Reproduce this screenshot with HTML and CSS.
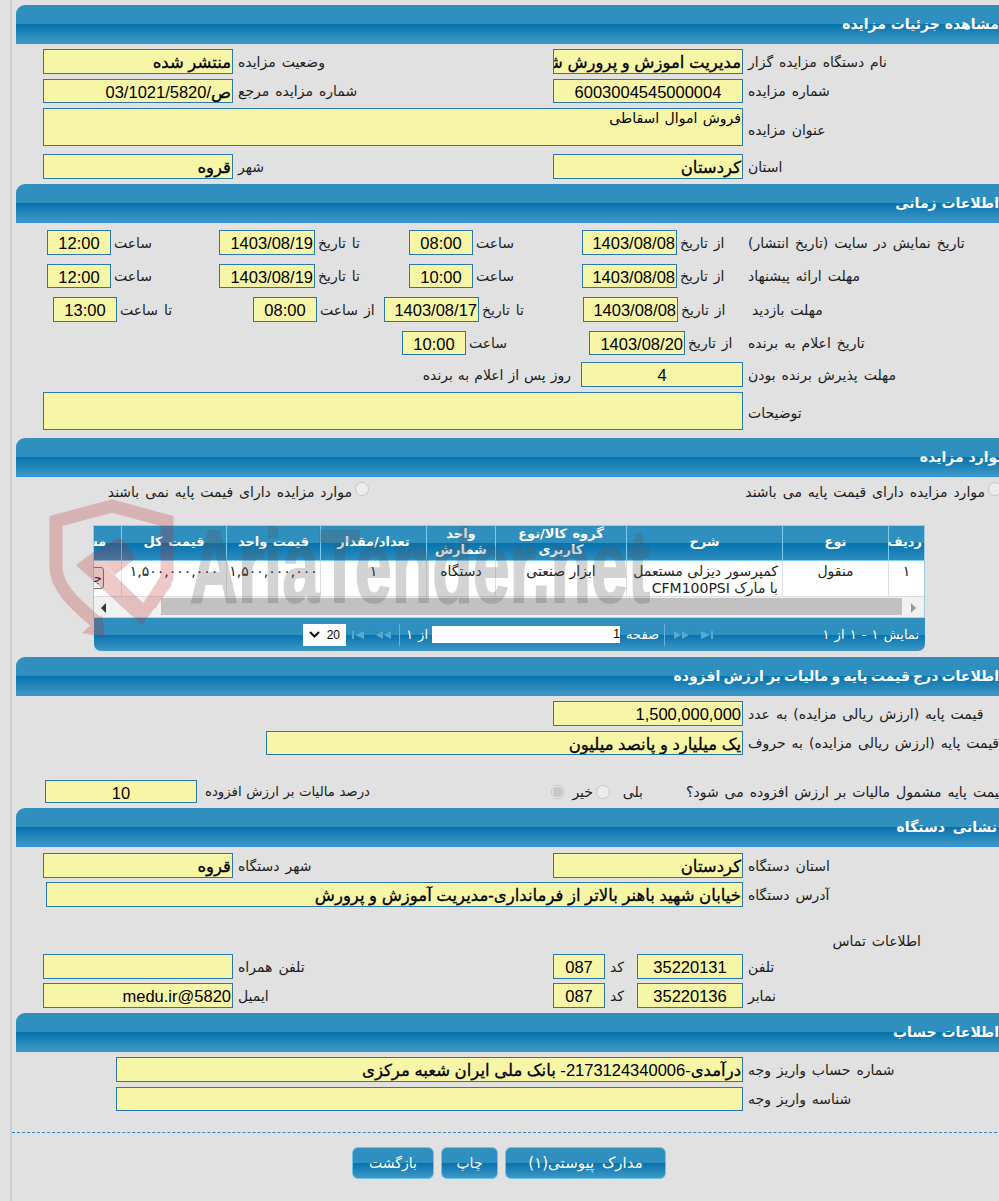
FILE: index.html
```html
<!DOCTYPE html>
<html lang="fa">
<head>
<meta charset="utf-8">
<title>مشاهده جزئیات مزایده</title>
<link rel="stylesheet" href="styles.css">
</head>
<body>
<div class="page">

  <section class="sec">
    <h2 class="bar">مشاهده جزئیات مزایده</h2>
    <div class="row mt5 h25"><span class="c w259">نام دستگاه مزایده گزار</span><div class="in b w190 left5">مدیریت اموزش و پرورش شهرستان قروه</div><span class="c w310 left5">وضعیت مزایده</span><div class="in b w190 left5">منتشر شده</div></div>
    <div class="row mt5 h24"><span class="c w259">شماره مزایده</span><div class="in mid w190 left5">6003004545000004</div><span class="c w310 left5">شماره مزایده مرجع</span><div class="in w190 left5"><b>ص</b>/03/1021/5820</div></div>
    <div class="row mt5 h38"><span class="c w259 low">عنوان مزایده</span><div class="in area w700 left5">فروش اموال اسقاطی</div></div>
    <div class="row mt8 h25"><span class="c w259">استان</span><div class="in b w190 left5">کردستان</div><span class="c w310 left5">شهر</span><div class="in b w190 left5">قروه</div></div>
  </section>

  <section class="sec mt5">
    <h2 class="bar">اطلاعات زمانی</h2>
    <div class="row mt7 h25"><span class="c w259">تاریخ نمایش در سایت (تاریخ انتشار)</span><span class="c w71">از تاریخ</span><div class="in w95">1403/08/08</div><span class="c w109">ساعت</span><div class="in mid w64">08:00</div><span class="c w94">تا تاریخ</span><div class="in w96">1403/08/19</div><span class="c w108">ساعت</span><div class="in mid w64">12:00</div></div>
    <div class="row mt9 h24"><span class="c w259">مهلت ارائه پیشنهاد</span><span class="c w71">از تاریخ</span><div class="in w95">1403/08/08</div><span class="c w109">ساعت</span><div class="in mid w64">10:00</div><span class="c w94">تا تاریخ</span><div class="in w96">1403/08/19</div><span class="c w108">ساعت</span><div class="in mid w64">12:00</div></div>
    <div class="row mt9 h25"><span class="c w259 ind4">مهلت بازدید</span><span class="c w70">از تاریخ</span><div class="in w95">1403/08/08</div><span class="c w104">تا تاریخ</span><div class="in w95">1403/08/17</div><span class="c w67">از ساعت</span><div class="in mid w64">08:00</div><span class="c w136">تا ساعت</span><div class="in mid w64">13:00</div></div>
    <div class="row mt9 h24"><span class="c w259">تاریخ اعلام به برنده</span><span class="c w63">از تاریخ</span><div class="in w96">1403/08/20</div><span class="c w123">ساعت</span><div class="in mid w64">10:00</div></div>
    <div class="row mt7 h25"><span class="c w259">مهلت پذیرش برنده بودن</span><div class="in mid w162 left5">4</div><span class="c days">روز پس از اعلام به برنده</span></div>
    <div class="row mt5 h38"><span class="c w259 low2">توضیحات</span><div class="in area w700 left5"></div></div>
  </section>

  <section class="sec mt8">
    <h2 class="bar t-items">موارد مزایده</h2>
    <div class="radios mt5">
      <label class="rad r1"><input type="radio" name="p" disabled><span>موارد مزایده دارای قیمت پایه می باشند</span></label>
      <label class="rad"><input type="radio" name="p" disabled><span>موارد مزایده دارای فیمت پایه نمی باشند</span></label>
    </div>
    <div class="grid">
      <table>
        <colgroup><col class="k1"><col class="k2"><col class="k3"><col class="k4"><col class="k5"><col class="k6"><col class="k7"><col class="k8"><col class="k9"></colgroup>
        <thead><tr><th>ردیف</th><th>نوع</th><th>شرح</th><th>گروه کالا/نوع کاربری</th><th>واحد شمارش</th><th>تعداد/مقدار</th><th>قیمت واحد</th><th>قیمت کل</th><th>مشاهده</th></tr></thead>
        <tbody><tr><td>۱</td><td>منقول</td><td class="desc">کمپرسور دیزلی مستعمل<br>با مارک CFM100PSI</td><td>ابزار صنعتی</td><td>دستگاه</td><td>۱</td><td>۱,۵۰۰,۰۰۰,۰۰۰</td><td>۱,۵۰۰,۰۰۰,۰۰۰</td><td class="act"><span class="mini">جزئیات</span></td></tr></tbody>
      </table>
      <div class="hscroll">
        <span class="sb-btn"><svg width="7" height="10" viewBox="0 0 7 10"><path d="M1 0l5 5-5 5z" fill="#9a9a9a"/></svg></span>
        <span class="thumb"></span>
        <span class="sb-left"><svg width="7" height="10" viewBox="0 0 7 10"><path d="M6 0L1 5l5 5z" fill="#333"/></svg></span>
      </div>
    </div>
    <div class="pager">
      <span class="p-info">نمایش ۱ - ۱ از ۱</span>
      <svg class="ic12" width="12" height="8" viewBox="0 0 12 8"><path d="M0 0l9 4-9 4zM10 0h2v8h-2z" fill="#5aa7d0"/></svg>
      <svg class="ic15" width="15" height="8" viewBox="0 0 15 8"><path d="M0 0l7 4-7 4zM8 0l7 4-7 4z" fill="#5aa7d0"/></svg>
      <span class="sep s1"></span>
      <span class="p-page">صفحه</span>
      <span class="p-input">1</span>
      <span class="p-of">از ۱</span>
      <span class="sep"></span>
      <svg class="ic15b" width="15" height="8" viewBox="0 0 15 8"><path d="M15 0L8 4l7 4zM7 0L0 4l7 4z" fill="#5aa7d0"/></svg>
      <svg class="ic15" width="12" height="8" viewBox="0 0 12 8"><path d="M12 0L3 4l9 4zM0 0h2v8H0z" fill="#5aa7d0"/></svg>
      <span class="p-size"><span>20</span><svg width="11" height="7" viewBox="0 0 11 7"><path d="M1 1l4.500 4.500L10 1" fill="none" stroke="#111" stroke-width="2"/></svg></span>
    </div>
  </section>

  <section class="sec mt6">
    <h2 class="bar t-price">اطلاعات درج قیمت پایه و مالیات بر ارزش افزوده</h2>
    <div class="row mt5 h25"><span class="c w259">قیمت پایه (ارزش ریالی مزایده) به عدد</span><div class="in w190 left5">1,500,000,000</div></div>
    <div class="row mt5 h24"><span class="c w259">قیمت پایه (ارزش ریالی مزایده) به حروف</span><div class="in b w477 left5">یک میلیارد و پانصد میلیون</div></div>
    <div class="row mt25 h23">
      <span class="c w321">قیمت پایه مشمول مالیات بر ارزش افزوده می شود؟</span>
      <span class="yes">بلی</span><input class="rb" type="radio" name="t" disabled>
      <span class="no">خیر</span><input class="rb chk" type="radio" name="t" disabled checked>
      <span class="c vat">درصد مالیات بر ارزش افزوده</span><div class="in mid w152">10</div>
    </div>
  </section>

  <section class="sec mt5">
    <h2 class="bar t-addr">نشانی دستگاه</h2>
    <div class="row mt6 h25"><span class="c w259">استان دستگاه</span><div class="in b w190 left5">کردستان</div><span class="c w310 left5">شهر دستگاه</span><div class="in b w190 left5">قروه</div></div>
    <div class="row mt4 h25"><span class="c w259">آدرس دستگاه</span><div class="in b w697 left5">خیابان شهید باهنر بالاتر از فرمانداری-مدیریت آموزش و پرورش</div></div>
    <div class="row mt25 h18"><span class="contact">اطلاعات تماس</span></div>
    <div class="row mt4 h25"><span class="c w259">تلفن</span><div class="in mid w106 left5">35220131</div><span class="c w32">کد</span><div class="in mid w52">087</div><span class="c w310 left5">تلفن همراه</span><div class="in w190 left5"></div></div>
    <div class="row mt4 h25"><span class="c w259">نمابر</span><div class="in mid w106 left5">35220136</div><span class="c w32">کد</span><div class="in mid w52">087</div><span class="c w310 left5">ایمیل</span><div class="in w190 left5">5820@medu.ir</div></div>
  </section>

  <section class="sec mt5">
    <h2 class="bar">اطلاعات حساب</h2>
    <div class="row mt5 h25"><span class="c w259">شماره حساب واریز وجه</span><div class="in w627 left5"><b>درآمدی</b>-2173124340006- <b>بانک ملی ایران شعبه مرکزی</b></div></div>
    <div class="row mt5 h24"><span class="c w259">شناسه واریز وجه</span><div class="in w627 left5"></div></div>
  </section>

  <div class="dash"></div>
  <div class="actions">
    <button class="btn w161" type="button">مدارک پیوستی(۱)</button>
    <button class="btn w57" type="button">چاپ</button>
    <button class="btn w82" type="button">بازگشت</button>
  </div>

  <svg class="mark" width="640" height="170" viewBox="0 0 640 170" aria-hidden="true">
    <g class="shield">
      <path class="band" d="M56 127C30 105 16 90 16 72V26L72 11 127 26V83L110 110"/>
      <path class="fill" d="M42 138L65 142 62 120zM36 70L52 58 103 108 120 85 132 90 102 130zM80 42L96 63 75 80 52 58z"/>
    </g>
    <text class="mark-text" x="150" y="107" textLength="460" lengthAdjust="spacingAndGlyphs">AriaTender.net</text>
  </svg>
</div>
</body>
</html>
```
FILE: styles.css
```css
html,body{margin:0;background:#e1e1e1;overflow:hidden;height:1201px;}
body{font-family:"DejaVu Sans",sans-serif;font-size:14px;word-spacing:1.5px;color:#1c1c1c;}
.page{position:relative;direction:rtl;width:991px;margin-left:10px;padding:5px 0 0 4px;border-left:2px solid #d0d0d0;height:1196px;box-sizing:content-box;}
.mt4{margin-top:4px}.mt5{margin-top:5px}.mt6{margin-top:6px}.mt7{margin-top:7px}.mt8{margin-top:8px}.mt9{margin-top:9px}.mt25{margin-top:25px}
.h18{height:18px}.h23{height:23px}.h24{height:24px}.h25{height:25px}.h38{height:38px}
.bar{box-sizing:border-box;height:39px;margin:0;background:linear-gradient(#2f8fbf 0 50%,#0672ad 50%,#3f98c6);border-bottom:1px solid #2e92dc;color:#fff;font-size:14px;word-spacing:0;line-height:38px;padding-right:8px;border-top-left-radius:9px;white-space:nowrap;}
.t-items{padding-right:1px;}
.t-price{word-spacing:-1.700px;}
.t-addr{word-spacing:3px;padding-right:10px;}
.row{display:flex;align-items:center;white-space:nowrap;}
.c{flex:none;box-sizing:border-box;text-align:left;padding-left:3px;}
.w259{width:259px;padding-left:0}
.w310{width:310px;padding-left:0}
.w321{width:321px;padding-left:0}
.w32{width:32px;padding-left:5px}
.w63{width:63px}.w67{width:67px}.w70{width:70px}.w71{width:71px}.w94{width:94px}.w104{width:104px}.w108{width:108px}.w109{width:109px}.w123{width:123px}.w136{width:136px}
.ind4{padding-left:4px}
.low{padding-top:6px}
.low2{padding-top:4px}
.left5{margin-right:5px}
.in{flex:none;box-sizing:border-box;height:100%;border:1px solid #2a78ae;background:#f7f5a6;color:#000;font-family:"Liberation Sans","DejaVu Sans",sans-serif;font-size:16.5px;word-spacing:0;line-height:24px;padding:0 1px;text-align:right;overflow:hidden;white-space:nowrap;}
.b,.in b{font-weight:400;-webkit-text-stroke:.3px #000;}
.mid{text-align:center;}
.area{font-family:"DejaVu Sans",sans-serif;font-size:14px;word-spacing:1px;line-height:19px;white-space:normal;}
.w52{width:52px}.w64{width:64px}.w95{width:95px}.w96{width:96px}.w106{width:106px}.w152{width:152px}.w162{width:162px}.w190{width:190px}.w477{width:477px}.w627{width:627px}.w697{width:697px}.w700{width:700px}
.days{padding:0 10px 0 0;text-align:right;word-spacing:.5px;}
.radios{display:flex;height:20px;white-space:nowrap;}
.rad{display:flex;flex:none;}
.rad span{margin-right:3px;padding-top:2px;}
.r1{box-sizing:border-box;width:638px;padding-right:5px;}
input[type=radio]{appearance:none;-webkit-appearance:none;flex:none;box-sizing:border-box;width:14px;height:14px;margin:0;border:1px solid #c6c6c6;border-radius:50%;background:#ececec;}
.grid{box-sizing:border-box;width:832px;height:93px;margin:23px 82px 0 0;border:1px solid #9ccbe4;border-bottom-color:#a9d3ea;background:#fff;overflow:hidden;}
table{border-collapse:separate;border-spacing:0;table-layout:fixed;width:884px;}
.k1{width:36px}.k2{width:106px}.k3{width:156px}.k4{width:131px}.k5{width:69px}.k6{width:106px}.k7{width:94px}.k8{width:105px}.k9{width:81px}
th{box-sizing:border-box;height:35px;padding:0 2px 2px;background:linear-gradient(#2f8fbf 0 50%,#0672ad 50%,#2c8dc0);border-left:1px solid #78cdf3;border-bottom:1px solid #78cdf3;color:#fff;font-size:13px;word-spacing:1px;line-height:16px;font-weight:700;}
td{box-sizing:border-box;height:36px;padding:2px 2px 0;border-left:1px solid #dedede;border-bottom:1px solid #dedede;text-align:center;vertical-align:top;font-size:14px;word-spacing:0;line-height:16.5px;color:#222;}
.desc{text-align:right;padding-right:4px;white-space:nowrap;}
.act{padding-right:17px;text-align:right;white-space:nowrap;overflow:hidden;}
.mini{display:inline-block;width:60px;height:22px;margin-top:4px;border:1px solid #777;border-radius:3px;background:#f3f3f3;font-size:13px;line-height:20px;box-sizing:border-box;padding-right:1px;text-align:right;}
.hscroll{display:flex;height:21px;background:#f1f1f1;}
.sb-btn{flex:none;width:22px;display:flex;align-items:center;justify-content:center;}
.thumb{flex:none;width:741px;height:17px;margin-top:1px;background:#c1c1c1;}
.sb-left{flex:1;display:flex;align-items:center;padding-left:6px;justify-content:flex-end;}
.pager{display:flex;align-items:center;box-sizing:border-box;width:831px;height:33px;margin-right:82px;background:linear-gradient(#2f8fbf 0 50%,#0672ad 50%,#3f98c6);border-radius:0 0 7px 7px;color:#fff;font-size:13px;word-spacing:1px;white-space:nowrap;}
.p-info{flex:none;box-sizing:border-box;width:212px;padding-right:6px;}
.ic12{flex:none;}
.ic15{flex:none;margin-right:12px;}
.ic15b{flex:none;margin-right:8px;}
.sep{flex:none;width:1px;height:22px;margin-right:1px;background:#6fb0d3;}
.s1{margin-right:9px;}
.p-page{flex:none;box-sizing:border-box;width:44px;padding-right:5px;}
.p-input{flex:none;box-sizing:border-box;width:188px;height:17px;background:#fff;color:#000;font-family:"Liberation Sans",sans-serif;font-size:12px;line-height:17px;text-align:right;}
.p-of{flex:none;box-sizing:border-box;width:31px;padding-right:4px;}
.p-size{flex:none;box-sizing:border-box;width:43px;height:22px;margin-right:6px;display:flex;align-items:center;justify-content:space-between;padding:0 6px;background:#fff;color:#000;font-family:"Liberation Sans",sans-serif;font-size:12px;}
.yes{flex:none;margin-right:43px;width:33px;}
.rb{margin-top:2px;}
.no{flex:none;margin-right:3px;width:28px;}
.rb.chk{background:radial-gradient(circle,#c8c8c8 0 5px,#ececec 5.5px);}
.vat{flex:none;box-sizing:border-box;width:173px;padding:0;text-align:right;margin-right:181px;font-size:13.300px;word-spacing:.3px;}
.contact{padding-right:86px;}
.dash{margin:21px 0 0;margin-left:-4px;border-top:1px dashed #2a86bd;}
.actions{display:flex;gap:7px;margin:14px 341px 0 0;}
.btn{box-sizing:border-box;height:32px;padding:0;border:1px solid #6cc5e8;border-radius:6px;background:linear-gradient(#2f8fbf 0 50%,#0672ad 50%,#3f98c6);color:#fff;font-family:"DejaVu Sans",sans-serif;font-size:14px;}
.w161{width:161px;font-size:15px;word-spacing:3px;}.w57{width:57px}.w82{width:82px}
.mark{position:absolute;left:28px;top:495px;pointer-events:none;direction:ltr;}
.shield{opacity:.24;}
.band{fill:none;stroke:#b22;stroke-width:13;}
.fill{fill:#b22;}
.mark-text{font-family:"Liberation Sans",sans-serif;font-weight:700;font-size:104px;word-spacing:0;fill:#555;stroke:#555;stroke-width:2;opacity:.25;}
```
